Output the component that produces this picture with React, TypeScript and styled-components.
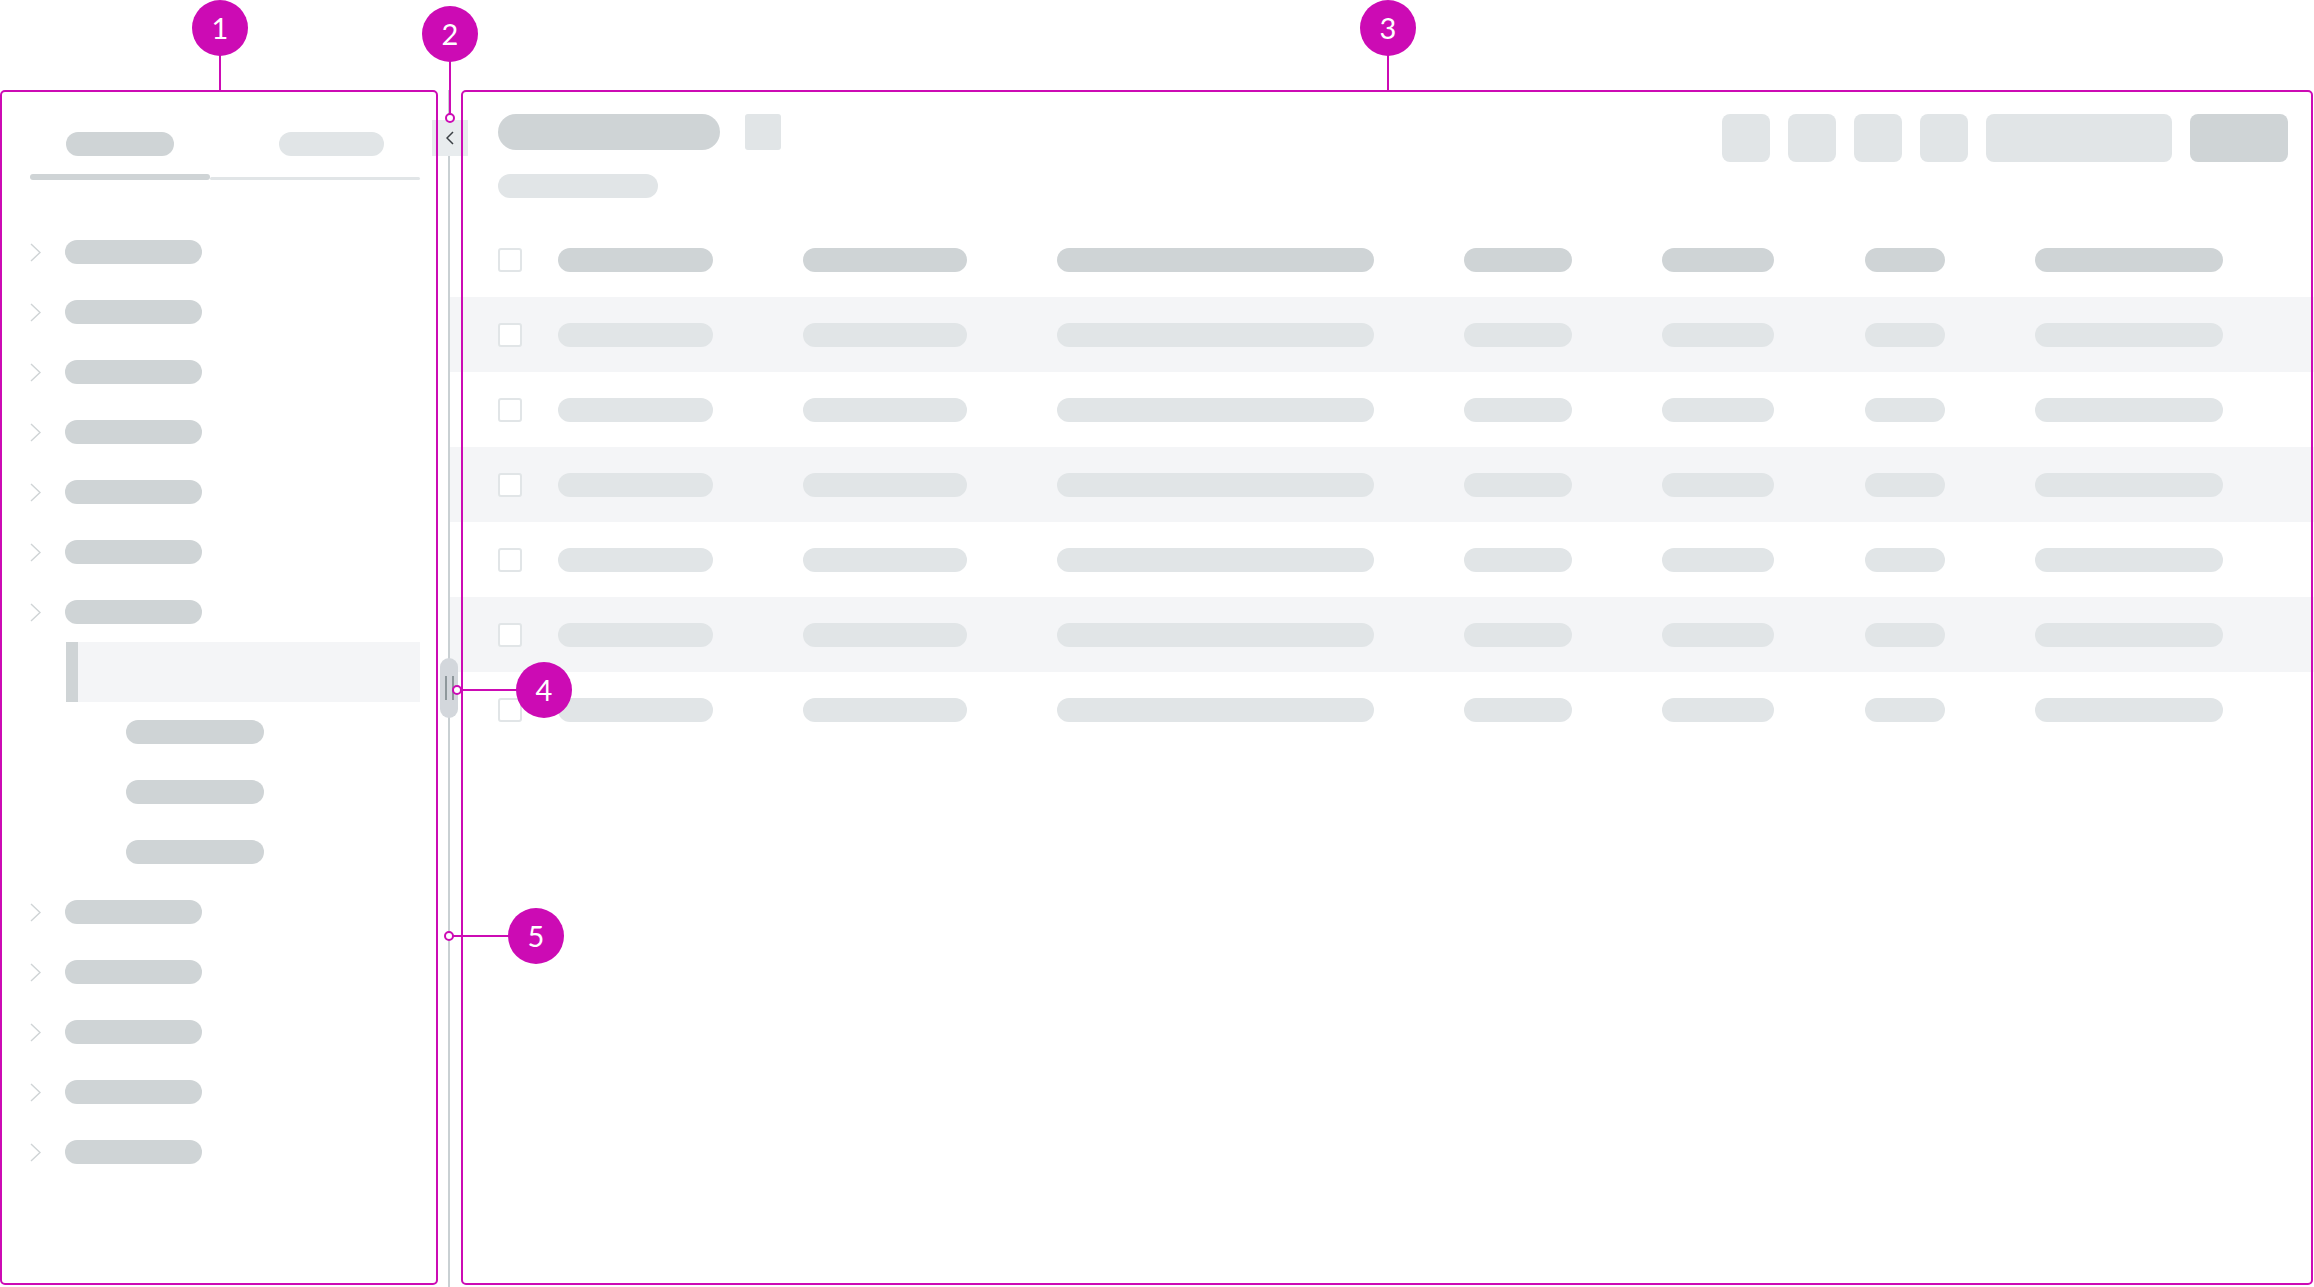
import React from 'react';
import styled, { createGlobalStyle } from 'styled-components';

const GlobalStyle = createGlobalStyle`
  html, body {
    margin: 0;
    padding: 0;
    background: #fff;
    font-family: Lato, "Noto Sans", sans-serif;
  }
`;

const DARK = '#cfd4d6';
const LIGHT = '#e1e5e7';
const STRIPE = '#f4f5f7';
const MAGENTA = '#cc0bb4';

const Page = styled.div`
  position: relative;
  width: 2314px;
  height: 1287px;
  padding-top: 90px;
  box-sizing: border-box;
  overflow: hidden;
`;

const Shell = styled.div`
  display: flex;
  height: 100%;
`;

/* ---------- sidebar ---------- */

const Sidebar = styled.aside`
  width: 448px;
  flex-shrink: 0;
  padding: 42px 28px 0 30px;
  box-sizing: border-box;
`;

const TabBar = styled.div`
  display: flex;
`;

const Tab = styled.div<{ width: number; shift?: number }>`
  width: ${({ width }) => width}px;
  height: 48px;
  display: flex;
  flex-direction: column;
  justify-content: space-between;
  align-items: center;
  padding-left: ${({ shift }) => shift ?? 0}px;
  box-sizing: border-box;
`;

const Underline = styled.div<{ active?: boolean }>`
  align-self: stretch;
  margin-left: ${({ active }) => (active ? 0 : -33)}px;
  height: ${({ active }) => (active ? 6 : 3)}px;
  border-radius: 3px;
  background: ${({ active }) => (active ? DARK : LIGHT)};
`;

const Pill = styled.div<{ w: number; h?: number; tone?: 'dark' | 'light' }>`
  width: ${({ w }) => w}px;
  height: ${({ h }) => h ?? 24}px;
  border-radius: ${({ h }) => (h ?? 24) / 2}px;
  background: ${({ tone }) => (tone === 'light' ? LIGHT : DARK)};
  flex-shrink: 0;
`;

const Tree = styled.div`
  margin-top: 42px;
  display: flex;
  flex-direction: column;
`;

const TreeRow = styled.div<{ child?: boolean }>`
  height: 60px;
  display: flex;
  align-items: center;
  gap: 24px;
  padding-left: ${({ child }) => (child ? 96 : 0)}px;
`;

const SelectedRow = styled.div`
  height: 60px;
  margin-left: 36px;
  background: ${STRIPE};
  border-left: 12px solid ${DARK};
`;

const Chevron = () => (
  <svg width="11" height="19" viewBox="0 0 11 19" fill="none">
    <path d="M1 1 L10 9.5 L1 18" stroke={DARK} strokeWidth="1.4" />
  </svg>
);

/* ---------- splitter ---------- */

const Splitter = styled.div`
  position: relative;
  width: 2px;
  flex-shrink: 0;
  background: #c9d0d3;
`;

const CollapseButton = styled.button`
  position: absolute;
  top: 30px;
  left: -16px;
  width: 36px;
  height: 36px;
  padding: 0;
  border: none;
  background: #e8ecee;
  display: flex;
  align-items: center;
  justify-content: center;
`;

const Handle = styled.div`
  position: absolute;
  top: 568px;
  left: -8px;
  width: 18px;
  height: 60px;
  border-radius: 9px;
  background: #d3d7dc;
  display: flex;
  justify-content: center;
  align-items: center;
  gap: 5px;
`;

const Grip = styled.span`
  width: 2px;
  height: 24px;
  background: #8e979b;
`;

/* ---------- main ---------- */

const Main = styled.main`
  flex: 1;
  display: flex;
  flex-direction: column;
`;

const Header = styled.div`
  display: flex;
  justify-content: space-between;
  align-items: flex-start;
  padding: 24px 26px 0 48px;
`;

const TitleBlock = styled.div`
  display: flex;
  flex-direction: column;
  gap: 24px;
`;

const TitleRow = styled.div`
  display: flex;
  gap: 25px;
`;

const Square = styled.div`
  width: 36px;
  height: 36px;
  border-radius: 3px;
  background: ${LIGHT};
`;

const Actions = styled.div`
  display: flex;
  gap: 18px;
`;

const ActionButton = styled.div<{ w: number; primary?: boolean }>`
  width: ${({ w }) => w}px;
  height: 48px;
  border-radius: 8px;
  background: ${({ primary }) => (primary ? DARK : LIGHT)};
`;

const Table = styled.div`
  margin-top: 24px;
  display: flex;
  flex-direction: column;
`;

const Row = styled.div<{ striped?: boolean }>`
  height: 75px;
  display: grid;
  grid-template-columns: 60px 245px 254px 407px 198px 203px 170px 188px;
  align-items: center;
  padding-left: 48px;
  background: ${({ striped }) => (striped ? STRIPE : '#fff')};
`;

const Checkbox = styled.div`
  width: 24px;
  height: 24px;
  box-sizing: border-box;
  border: 2px solid ${LIGHT};
  border-radius: 3px;
  background: #fff;
`;

/* ---------- callouts ---------- */

const Overlay = styled.div`
  position: absolute;
  inset: 0;
  pointer-events: none;
`;

const Frame = styled.div<{ x: number; w: number }>`
  position: absolute;
  top: 90px;
  left: ${({ x }) => x}px;
  width: ${({ w }) => w}px;
  height: 1195px;
  box-sizing: border-box;
  border: 2px solid ${MAGENTA};
  border-radius: 5px;
`;

const Badge = styled.div<{ x: number; y: number }>`
  position: absolute;
  left: ${({ x }) => x - 28}px;
  top: ${({ y }) => y - 28}px;
  width: 56px;
  height: 56px;
  border-radius: 50%;
  background: ${MAGENTA};
  color: #fff;
  font-size: 29px;
  line-height: 56px;
  text-align: center;
`;

const Leader = styled.div<{ x: number; y: number; w: number; h: number }>`
  position: absolute;
  left: ${({ x }) => x}px;
  top: ${({ y }) => y}px;
  width: ${({ w }) => w}px;
  height: ${({ h }) => h}px;
  background: ${MAGENTA};
`;

const Ring = styled.div<{ x: number; y: number }>`
  position: absolute;
  left: ${({ x }) => x - 5}px;
  top: ${({ y }) => y - 5}px;
  width: 10px;
  height: 10px;
  box-sizing: border-box;
  border: 2px solid ${MAGENTA};
  border-radius: 50%;
  background: #fff;
`;

const columns = [155, 164, 317, 108, 112, 80, 188];
const topLevel = 7;
const children = 3;
const trailing = 5;

export default function App() {
  return (
    <>
      <GlobalStyle />
      <Page>
        <Shell>
          <Sidebar>
            <TabBar>
              <Tab width={180}>
                <Pill w={108} />
                <Underline active />
              </Tab>
              <Tab width={210} shift={33}>
                <Pill w={105} tone="light" />
                <Underline />
              </Tab>
            </TabBar>
            <Tree>
              {Array.from({ length: topLevel }).map((_, i) => (
                <TreeRow key={`a${i}`}>
                  <Chevron />
                  <Pill w={137} />
                </TreeRow>
              ))}
              <SelectedRow />
              {Array.from({ length: children }).map((_, i) => (
                <TreeRow key={`c${i}`} child>
                  <Pill w={138} />
                </TreeRow>
              ))}
              {Array.from({ length: trailing }).map((_, i) => (
                <TreeRow key={`b${i}`}>
                  <Chevron />
                  <Pill w={137} />
                </TreeRow>
              ))}
            </Tree>
          </Sidebar>

          <Splitter>
            <CollapseButton>
              <svg width="8" height="14" viewBox="0 0 8 14" fill="none">
                <path d="M7 1 L1 7 L7 13" stroke="#3a3f44" strokeWidth="1.5" />
              </svg>
            </CollapseButton>
            <Handle>
              <Grip />
              <Grip />
            </Handle>
          </Splitter>

          <Main>
            <Header>
              <TitleBlock>
                <TitleRow>
                  <Pill w={222} h={36} />
                  <Square />
                </TitleRow>
                <Pill w={160} tone="light" />
              </TitleBlock>
              <Actions>
                <ActionButton w={48} />
                <ActionButton w={48} />
                <ActionButton w={48} />
                <ActionButton w={48} />
                <ActionButton w={186} />
                <ActionButton w={98} primary />
              </Actions>
            </Header>
            <Table>
              <Row>
                <Checkbox />
                {columns.map((w, i) => (
                  <Pill key={i} w={w} />
                ))}
              </Row>
              {Array.from({ length: 6 }).map((_, r) => (
                <Row key={r} striped={r % 2 === 0}>
                  <Checkbox />
                  {columns.map((w, i) => (
                    <Pill key={i} w={w} tone="light" />
                  ))}
                </Row>
              ))}
            </Table>
          </Main>
        </Shell>

        <Overlay>
          <Frame x={0} w={438} />
          <Frame x={461} w={1852} />

          <Leader x={219} y={50} w={2} h={41} />
          <Badge x={220} y={28}>1</Badge>

          <Leader x={449} y={56} w={2} h={58} />
          <Ring x={450} y={118} />
          <Badge x={450} y={34}>2</Badge>

          <Leader x={1387} y={50} w={2} h={41} />
          <Badge x={1388} y={28}>3</Badge>

          <Leader x={461} y={689} w={60} h={2} />
          <Ring x={457} y={690} />
          <Badge x={544} y={690}>4</Badge>

          <Leader x={453} y={935} w={60} h={2} />
          <Ring x={449} y={936} />
          <Badge x={536} y={936}>5</Badge>
        </Overlay>
      </Page>
    </>
  );
}
